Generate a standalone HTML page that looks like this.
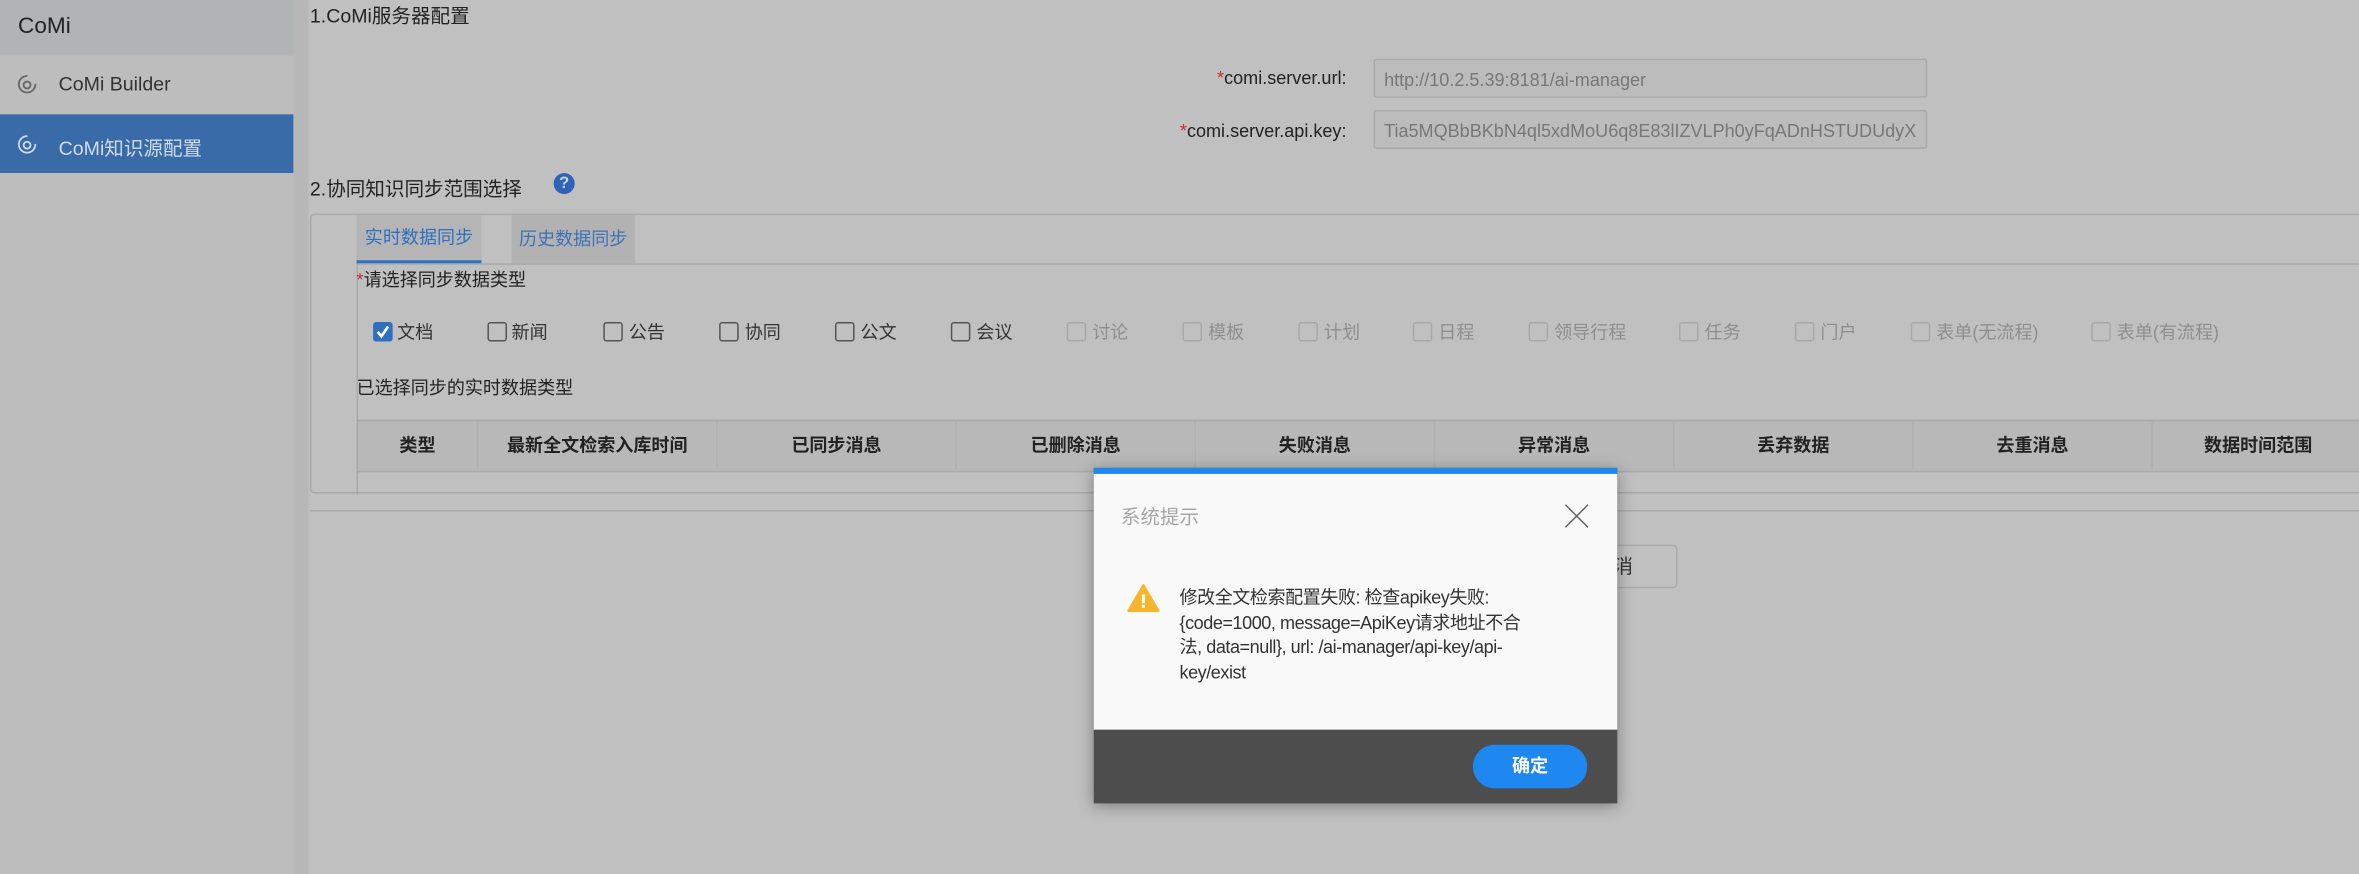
<!DOCTYPE html>
<html><head><meta charset="utf-8"><style>
html,body{margin:0;padding:0;width:2359px;height:874px;overflow:hidden;background:#c0c0c0}
#w{position:absolute;left:0;top:0;width:1568px;height:581px;transform:scale(1.50446);transform-origin:0 0;font-family:"Liberation Sans","Noto Sans CJK SC",sans-serif;color:#222;background:#c0c0c0}
.a{position:absolute;white-space:nowrap}
.cb{position:absolute;width:11px;height:11px;border:1px solid #555;border-radius:2px;top:214px}
.cb.d{border-color:#a8a8a8}
.cl{position:absolute;top:212px;font-size:12px;color:#333}
.cl.d{color:#8e8e8e}
.th{position:absolute;top:280px;height:32px;line-height:32px;font-size:12px;font-weight:bold;text-align:center;border-right:1px solid #b0b0b0;color:#222}
</style></head><body><div id="w">
<div class="a" style="left:0;top:0;width:195px;height:581px;background:#bdbdbd"></div>
<div class="a" style="left:195px;top:0;width:10px;height:581px;background:#b7b7b7"></div>
<div class="a" style="left:0;top:0;width:195px;height:37px;background:#b1b3b5"></div>
<div class="a" style="left:12px;top:9px;font-size:15px;color:#222">CoMi</div>
<svg class="a" style="left:11px;top:49px" width="14" height="14" viewBox="0 0 14 14"><circle cx="7" cy="7" r="5.5" fill="none" stroke="#666" stroke-width="1.2" stroke-dasharray="26 8"/><circle cx="7" cy="7.5" r="2.3" fill="none" stroke="#666" stroke-width="1.2"/></svg>
<div class="a" style="left:39px;top:48px;font-size:13px;color:#333">CoMi Builder</div>
<div class="a" style="left:0;top:76px;width:195px;height:39px;background:#386ba8"></div>
<svg class="a" style="left:11px;top:89px" width="14" height="14" viewBox="0 0 14 14"><circle cx="7" cy="7" r="5.5" fill="none" stroke="#d0dcea" stroke-width="1.2" stroke-dasharray="26 8"/><circle cx="7" cy="7.5" r="2.3" fill="none" stroke="#d0dcea" stroke-width="1.2"/></svg>
<div class="a" style="left:39px;top:88px;font-size:13px;color:#d0dcea">CoMi知识源配置</div>

<div class="a" style="left:206px;top:0;font-size:13px">1.CoMi服务器配置</div>
<div class="a" style="left:700px;top:45px;width:195px;text-align:right;font-size:12px"><span style="color:#c03030">*</span>comi.server.url:</div>
<div class="a" style="left:913px;top:39px;width:368px;height:26px;border:1px solid #aaa;border-radius:2px;background:#bcbcbc;font-size:12px;color:#777;line-height:26px;box-sizing:border-box;padding-left:6px">http://10.2.5.39:8181/ai-manager</div>
<div class="a" style="left:700px;top:80px;width:195px;text-align:right;font-size:12px"><span style="color:#c03030">*</span>comi.server.api.key:</div>
<div class="a" style="left:913px;top:73px;width:368px;height:26px;border:1px solid #aaa;border-radius:2px;background:#bcbcbc;font-size:12px;color:#777;line-height:26px;box-sizing:border-box;padding-left:6px">Tia5MQBbBKbN4ql5xdMoU6q8E83lIZVLPh0yFqADnHSTUDUdyX</div>

<div class="a" style="left:206px;top:115px;font-size:13px">2.协同知识同步范围选择</div>
<div class="a" style="left:368px;top:115px;width:14px;height:14px;border-radius:50%;background:#2f62b8;color:#c8d4e8;font-size:11px;font-weight:bold;text-align:center;line-height:14px">?</div>

<div class="a" style="left:206px;top:142px;width:1380px;height:186px;border:1px solid #a9a9a9;border-radius:3px;box-sizing:border-box"></div>
<div class="a" style="left:237px;top:175px;width:1340px;height:153px;border-left:1px solid #a9a9a9;border-top:1px solid #a9a9a9"></div>
<div class="a" style="left:237px;top:143px;width:83px;height:32px;background:#b5b5b5;border-bottom:2px solid #2f6fc0;box-sizing:border-box;font-size:12px;color:#2f6fc0;text-align:center;line-height:30px">实时数据同步</div>
<div class="a" style="left:340px;top:143px;width:82px;height:32px;background:#b2b2b2;font-size:12px;color:#3d72b8;text-align:center;line-height:32px">历史数据同步</div>
<div class="a" style="left:237px;top:177px;font-size:12px"><span style="color:#c03030">*</span>请选择同步数据类型</div>

<div class="cb" style="left:248px;background:#2f6fc0;border-color:#2f6fc0"></div>
<svg class="a" style="left:249px;top:215px" width="11" height="11" viewBox="0 0 11 11"><path d="M2 5.5 L4.5 8.5 L9 2" fill="none" stroke="#fff" stroke-width="1.8"/></svg>
<div class="cl" style="left:264px">文档</div>
<div class="cb" style="left:324px"></div><div class="cl" style="left:340px">新闻</div>
<div class="cb" style="left:401px"></div><div class="cl" style="left:418px">公告</div>
<div class="cb" style="left:478px"></div><div class="cl" style="left:495px">协同</div>
<div class="cb" style="left:555px"></div><div class="cl" style="left:572px">公文</div>
<div class="cb" style="left:632px"></div><div class="cl" style="left:649px">会议</div>
<div class="cb d" style="left:709px"></div><div class="cl d" style="left:726px">讨论</div>
<div class="cb d" style="left:786px"></div><div class="cl d" style="left:803px">模板</div>
<div class="cb d" style="left:863px"></div><div class="cl d" style="left:880px">计划</div>
<div class="cb d" style="left:939px"></div><div class="cl d" style="left:956px">日程</div>
<div class="cb d" style="left:1016px"></div><div class="cl d" style="left:1033px">领导行程</div>
<div class="cb d" style="left:1116px"></div><div class="cl d" style="left:1133px">任务</div>
<div class="cb d" style="left:1193px"></div><div class="cl d" style="left:1210px">门户</div>
<div class="cb d" style="left:1270px"></div><div class="cl d" style="left:1287px">表单(无流程)</div>
<div class="cb d" style="left:1390px"></div><div class="cl d" style="left:1407px">表单(有流程)</div>

<div class="a" style="left:237px;top:249px;font-size:12px">已选择同步的实时数据类型</div>
<div class="a" style="left:237px;top:279px;width:1331px;height:33px;background:#b8b8b8;border-top:1px solid #a9a9a9;border-bottom:1px solid #a9a9a9;border-left:1px solid #a9a9a9"></div>
<div class="th" style="left:238px;width:79px">类型</div>
<div class="th" style="left:318px;width:158px">最新全文检索入库时间</div>
<div class="th" style="left:477px;width:158px">已同步消息</div>
<div class="th" style="left:636px;width:158px">已删除消息</div>
<div class="th" style="left:795px;width:158px">失败消息</div>
<div class="th" style="left:954px;width:158px">异常消息</div>
<div class="th" style="left:1113px;width:158px">丢弃数据</div>
<div class="th" style="left:1272px;width:158px">去重消息</div>
<div class="th" style="left:1431px;width:140px;border:none">数据时间范围</div>

<div class="a" style="left:206px;top:339px;width:1362px;height:1px;background:#a9a9a9"></div>
<div class="a" style="left:1030px;top:362px;width:83px;height:27px;border:1px solid #a9a9a9;border-radius:3px;font-size:13px;text-align:center;line-height:27px;color:#333">取消</div>

<div class="a" style="left:727px;top:311px;width:348px;height:223px;background:#4d4d4d;box-shadow:0 2px 10px rgba(0,0,0,.35)"></div>
<div class="a" style="left:727px;top:311px;width:348px;height:4px;background:#1e87f0"></div>
<div class="a" style="left:727px;top:315px;width:348px;height:170px;background:#f9f9f9"></div>
<div class="a" style="left:745px;top:333px;font-size:13px;color:#a6a6a6">系统提示</div>
<svg class="a" style="left:1040px;top:335px" width="16" height="16" viewBox="0 0 16 16"><path d="M0.5 0.5 L15.5 15.5 M15.5 0.5 L0.5 15.5" stroke="#666" stroke-width="1"/></svg>
<svg class="a" style="left:749px;top:388px" width="22" height="19" viewBox="0 0 22 19"><path d="M11 1 L21 18 L1 18 Z" fill="#f7b52c" stroke="#f7b52c" stroke-width="1.5" stroke-linejoin="round"/><rect x="10" y="7" width="2" height="6" fill="#fff"/><rect x="10" y="14" width="2" height="2" fill="#fff"/></svg>
<div class="a" style="left:784px;top:389px;font-size:12px;line-height:16.5px;color:#333;letter-spacing:-0.3px">修改全文检索配置失败: 检查apikey失败:<br>{code=1000, message=ApiKey请求地址不合<br>法, data=null}, url: /ai-manager/api-key/api-<br>key/exist</div>
<div class="a" style="left:979px;top:495px;width:76px;height:29px;border-radius:15px;background:#1e87f0;color:#fff;font-size:12px;font-weight:bold;text-align:center;line-height:29px">确定</div>
</div></body></html>
